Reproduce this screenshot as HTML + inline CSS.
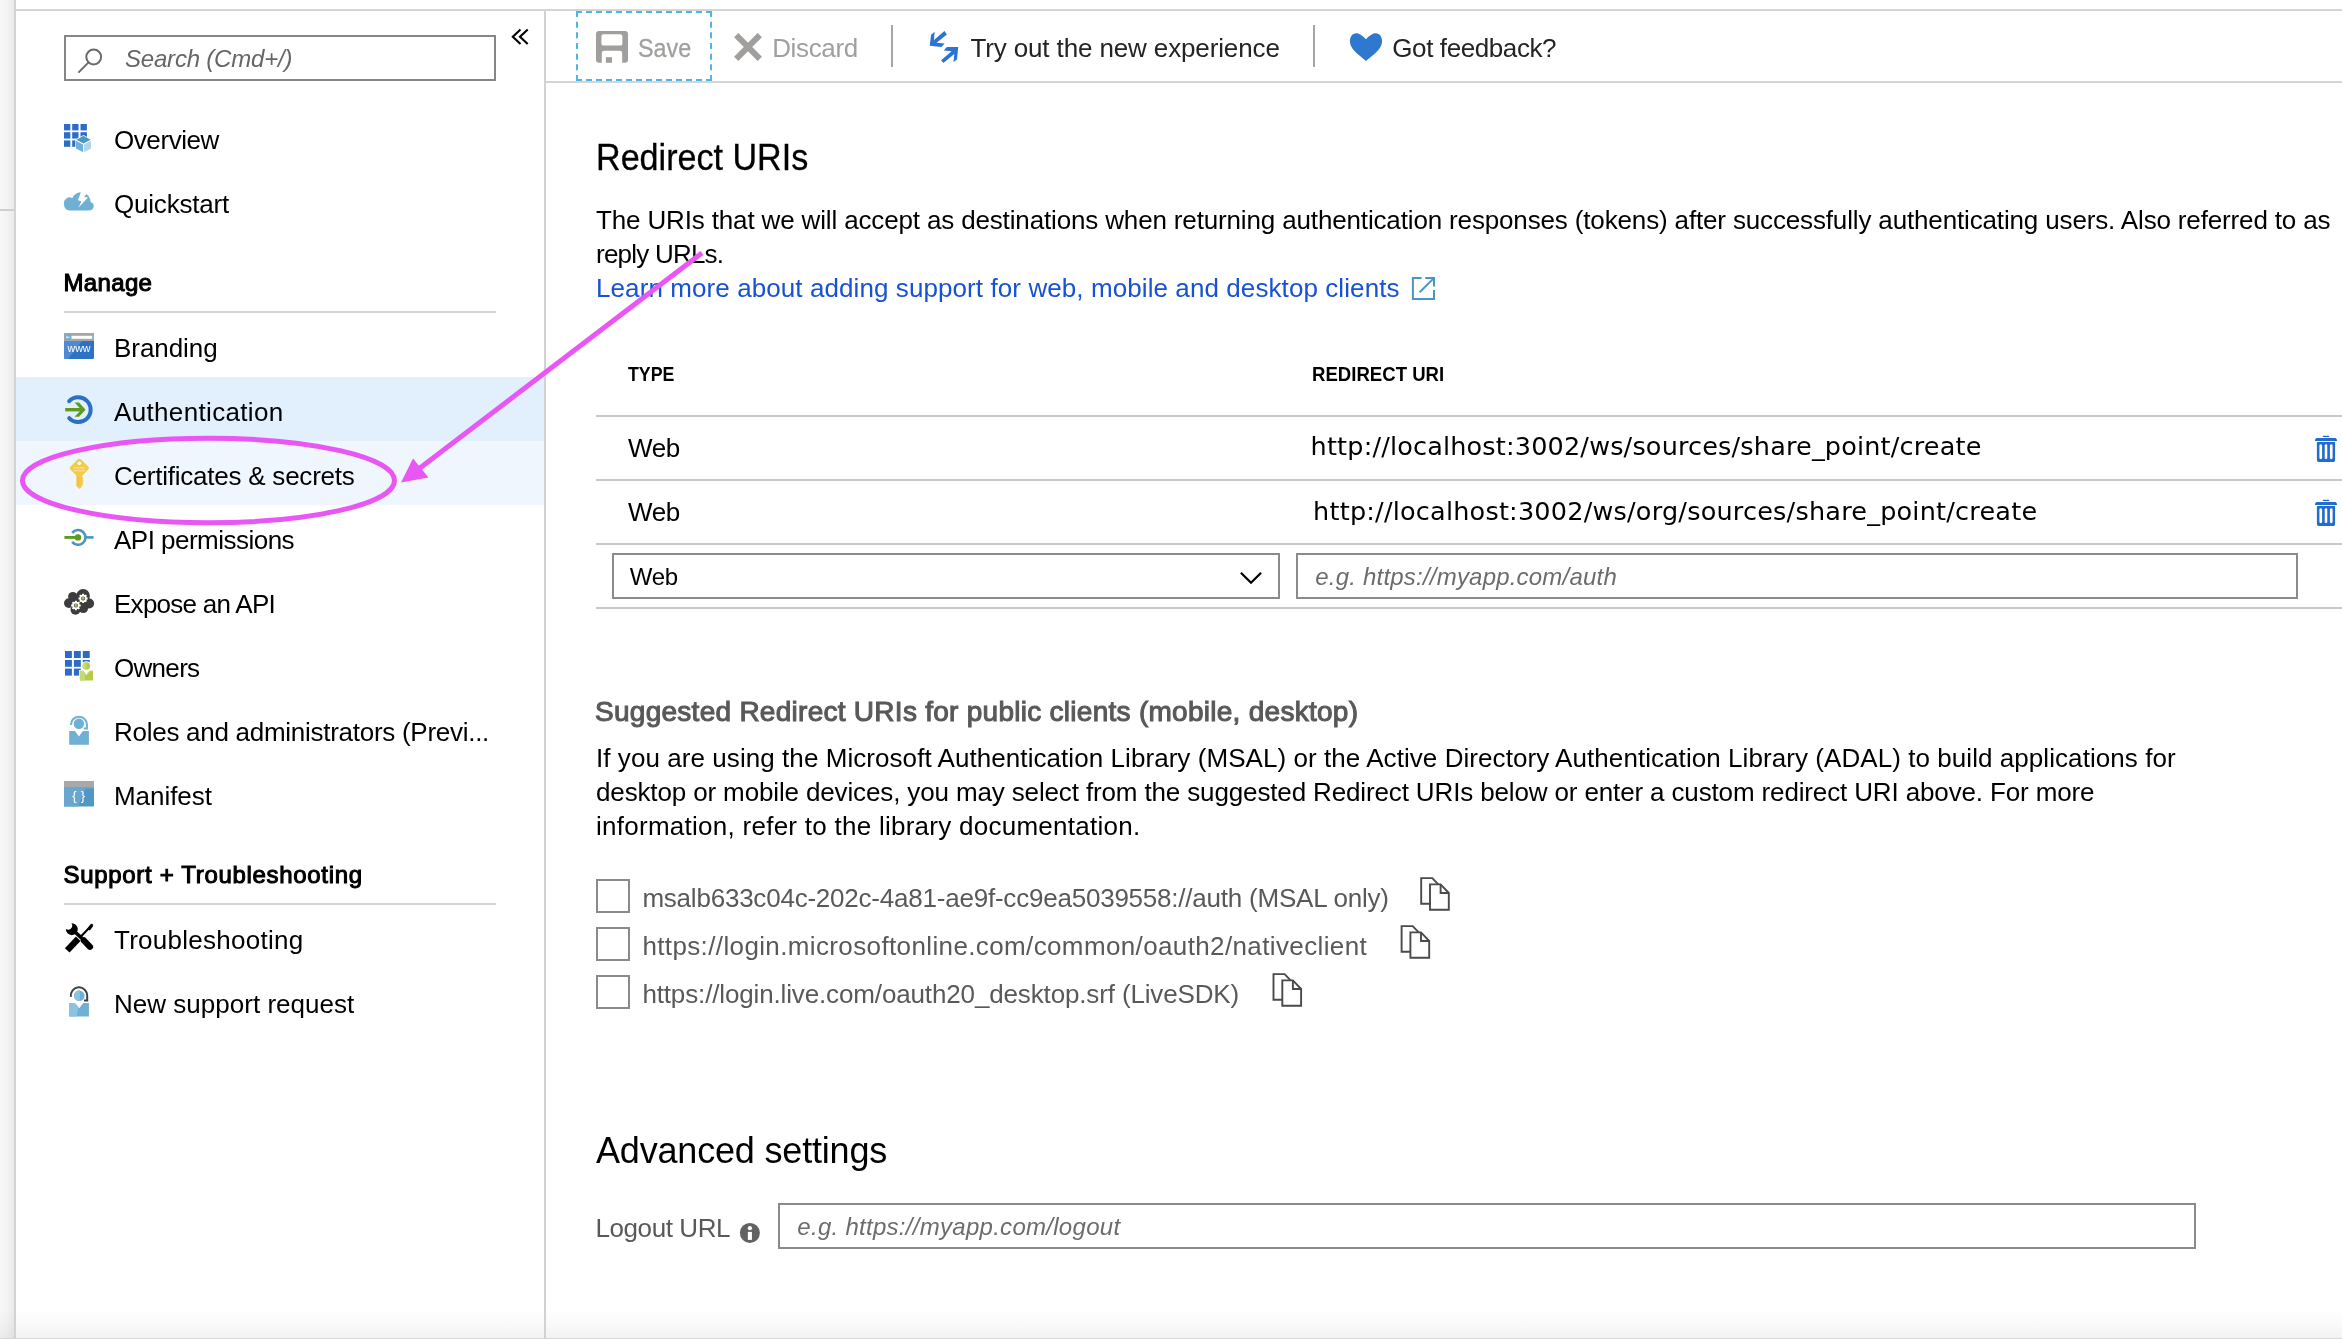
<!DOCTYPE html>
<html lang="en">
<head>
<meta charset="utf-8">
<title>Authentication - App registration</title>
<style>
html,body{margin:0;padding:0;}
body{width:2342px;height:1339px;overflow:hidden;background:#fff;position:relative;font-family:"Liberation Sans",sans-serif;}
#page{position:absolute;left:0;top:0;width:2342px;height:1339px;overflow:hidden;will-change:transform;background:#fff;}
.abs{position:absolute;}
.t{position:absolute;white-space:pre;display:block;}
svg{position:absolute;overflow:visible;}
/* chrome */
#strip{left:0;top:0;width:14px;height:1339px;background:linear-gradient(90deg,#f8f8f8 0%,#f4f4f4 45%,#ebebeb 100%);}
#stripline{left:14px;top:0;width:2px;height:1339px;background:#d3d3d3;}
#stripmark{left:0;top:209px;width:14px;height:2px;background:#cfcfcf;}
#topline{left:16px;top:9px;width:2326px;height:2px;background:#d5d5d5;}
#sidediv{left:544px;top:11px;width:2px;height:1328px;background:#d2d2d2;z-index:3;}
#stripline{z-index:3;}
#toolline{left:546px;top:81px;width:1796px;height:2px;background:#d5d5d5;}
#botshade{left:0;top:1309px;width:2342px;height:30px;background:linear-gradient(180deg,rgba(0,0,0,0) 0%,rgba(0,0,0,0.02) 45%,rgba(0,0,0,0.05) 100%);}
#botline{left:0;top:1338px;width:2342px;height:1px;background:#d6d6d6;}
/* sidebar */
#search{left:64px;top:35px;width:428px;height:42px;border:2px solid #868686;background:#fff;}
.hl1{left:16px;top:377px;width:528px;height:64px;background:#e2effc;}
.hl2{left:16px;top:441px;width:528px;height:64px;background:#eff6fd;}
.hr{height:2px;background:#c8c8c8;}
#sidebar .hr{background:#d4d4d4;}
/* main */
.box{border:2px solid #8a8a8a;background:#fff;box-sizing:border-box;}
.cbx{width:34px;height:34px;border:2px solid #8a8a8a;background:#fff;box-sizing:border-box;}
#savefocus{left:576px;top:11px;width:132px;height:66px;border:2px dashed #4fb4e6;}
.sep{width:2px;height:42px;top:25px;background:#a6a6a6;}
</style>
</head>
<body>
<div id="page">
<!-- page chrome -->
<div class="abs" id="strip"></div>
<div class="abs" id="stripline"></div>
<div class="abs" id="stripmark"></div>
<div class="abs" id="topline"></div>
<div class="abs" id="sidediv"></div>
<div class="abs" id="toolline"></div>

<!-- sidebar -->
<nav id="sidebar">
  <div class="abs hl1"></div>
  <div class="abs hl2"></div>
  <div class="abs" id="search"></div>
  <span class="t ph" style="left:125.0px;top:43.18px;font-size:24px;line-height:31px;letter-spacing:-0.198px;color:#666666;font-style:italic;">Search (Cmd+/)</span>
  <span class="t mi" style="left:114.0px;top:122.99px;font-size:26px;line-height:34px;letter-spacing:-0.426px;color:#000;">Overview</span>
  <span class="t mi" style="left:114.0px;top:186.99px;font-size:26px;line-height:34px;letter-spacing:-0.201px;color:#000;">Quickstart</span>
  <span class="t hd" style="left:63.5px;top:267.18px;font-size:24px;line-height:31px;letter-spacing:0.343px;color:#000;-webkit-text-stroke:1.05px #000;">Manage</span>
  <div class="abs hr" style="left:64px;top:311px;width:432px;"></div>
  <span class="t mi" style="left:114.0px;top:330.99px;font-size:26px;line-height:34px;letter-spacing:-0.060px;color:#000;">Branding</span>
  <span class="t mi" style="left:114.0px;top:394.99px;font-size:26px;line-height:34px;letter-spacing:0.343px;color:#000;">Authentication</span>
  <span class="t mi" style="left:114.0px;top:458.99px;font-size:26px;line-height:34px;letter-spacing:-0.231px;color:#000;">Certificates &amp; secrets</span>
  <span class="t mi" style="left:114.0px;top:522.99px;font-size:26px;line-height:34px;letter-spacing:-0.517px;color:#000;">API permissions</span>
  <span class="t mi" style="left:114.0px;top:586.99px;font-size:26px;line-height:34px;letter-spacing:-0.728px;color:#000;">Expose an API</span>
  <span class="t mi" style="left:114.0px;top:650.99px;font-size:26px;line-height:34px;letter-spacing:-0.696px;color:#000;">Owners</span>
  <span class="t mi" style="left:114.0px;top:714.99px;font-size:26px;line-height:34px;letter-spacing:-0.274px;color:#000;">Roles and administrators (Previ...</span>
  <span class="t mi" style="left:114.0px;top:778.99px;font-size:26px;line-height:34px;letter-spacing:-0.049px;color:#000;">Manifest</span>
  <span class="t hd" style="left:63.5px;top:859.18px;font-size:24px;line-height:31px;letter-spacing:0.681px;color:#000;-webkit-text-stroke:1.05px #000;">Support + Troubleshooting</span>
  <div class="abs hr" style="left:64px;top:903px;width:432px;"></div>
  <span class="t mi" style="left:114.0px;top:922.99px;font-size:26px;line-height:34px;letter-spacing:0.261px;color:#000;">Troubleshooting</span>
  <span class="t mi" style="left:114.0px;top:986.99px;font-size:26px;line-height:34px;letter-spacing:0.018px;color:#000;">New support request</span>
  <svg id="icons-side" width="2342" height="1339" viewBox="0 0 2342 1339" style="left:0;top:0;">
    <!-- search magnifier -->
    <g fill="none" stroke="#6a6a6a" stroke-width="2"><circle cx="93.7" cy="57" r="7.4"/><path d="M88.3 62.6 L78.4 72.6"/></g>
    <!-- collapse chevrons -->
    <path d="M520.5 29.6 L512.8 36.8 L520.5 44 M527.7 29.6 L520 36.8 L527.7 44" fill="none" stroke="#000" stroke-width="2.1"/>
    <!-- overview -->
    <g id="ic-overview">
      <g fill="#2c6cc4">
        <rect x="64" y="124" width="6.3" height="6.4"/><rect x="72.2" y="124" width="6.3" height="6.4"/><rect x="80.5" y="124" width="6.4" height="6.4"/>
        <rect x="64" y="132.2" width="6.3" height="6.4"/><rect x="72.2" y="132.2" width="6.3" height="6.4"/><rect x="80.5" y="132.2" width="6.4" height="6.4"/>
        <rect x="64" y="140.4" width="6.3" height="6.4"/><rect x="72.2" y="140.4" width="6.3" height="6.4"/>
      </g>
      <path d="M83.5 134.9 L91.8 139.5 V148.7 L83.5 153.1 L75.3 148.7 V139.5 Z" fill="#fff"/>
      <path d="M83.5 135.8 L90.6 139.7 L83.5 143.4 L76.4 139.7 Z" fill="#4f96c4"/>
      <path d="M76 140.8 L83 144.5 V152.2 L76 148.4 Z" fill="#72b1d6"/>
      <path d="M84 144.5 L91 140.8 V148.4 L84 152.2 Z" fill="#b0d4ea"/>
    </g>
    <!-- quickstart -->
    <g id="ic-quick">
      <path d="M69.6 210.5 H89.6 A4.4 4.4 0 0 0 90.6 201.9 A9.6 9.6 0 0 0 72.3 197.9 A6 6 0 0 0 64 204.6 A5.8 5.8 0 0 0 69.6 210.5 Z" fill="#6fb0d4"/>
      <path d="M81.4 190.6 L78 200.3 L81.4 201.3 L78.6 207.4 L88 197.6 L84.2 197 L87.3 192.4 Z" fill="#fff"/>
    </g>
    <!-- branding -->
    <g id="ic-brand">
      <rect x="64" y="333" width="30" height="26" rx="1.2" fill="#2d72c4"/>
      <path d="M64 359 V341 H82 L68 359 Z" fill="#5b93d4" opacity="0.75"/>
      <path d="M65.2 333 H92.8 A1.2 1.2 0 0 1 94 334.2 V341 H64 V334.2 A1.2 1.2 0 0 1 65.2 333 Z" fill="#a6a6a6"/>
      <rect x="71.5" y="335.8" width="20.6" height="3" fill="#fff"/>
      <circle cx="68" cy="337.2" r="2.9" fill="#5bb0de"/>
      <path d="M66.3 337.2 H69.8 M67.6 336 L66.3 337.2 L67.6 338.4" stroke="#fff" stroke-width="0.8" fill="none"/>
      <text x="79" y="352.3" font-family="Liberation Sans, sans-serif" font-size="11" fill="#fff" text-anchor="middle" textLength="23" lengthAdjust="spacingAndGlyphs">www</text>
    </g>
    <!-- authentication -->
    <g id="ic-auth" fill="none">
      <path d="M69.2 401.2 A12.4 12.4 0 1 1 69.2 418.2" stroke="#2b6fc6" stroke-width="4" stroke-linecap="round"/>
      <path d="M65.2 409.7 H82" stroke="#5e9a1f" stroke-width="3.4"/>
      <path d="M74.6 402.6 H79 L85.6 409.7 L79 416.8 H74.6 L81.2 409.7 Z" fill="#5e9a1f"/>
    </g>
    <!-- key -->
    <g id="ic-key">
      <path d="M79.4 458.7 Q80.4 458.7 81.2 459.6 L88.4 466.8 Q89.8 468.2 88.4 469.6 L82.4 475.6 V477.6 L83.6 478.6 L82.4 479.8 L83.8 481 L82.4 482.2 L83.6 483.4 L82.4 484.6 V486 L79.5 489 L76.3 486 V475.6 L70.4 469.6 Q69 468.2 70.4 466.8 L77.6 459.6 Q78.4 458.7 79.4 458.7 Z" fill="#f4cb45"/>
      <circle cx="79.3" cy="463.3" r="1.8" fill="#fff"/>
      <path d="M73.6 467.9 H85.2 M73.6 470.6 H85.2" stroke="#f9de8e" stroke-width="1.3"/>
      <path d="M78.2 477 V486" stroke="#f1b244" stroke-width="0.9"/>
    </g>
    <!-- api permissions -->
    <g id="ic-api" fill="none">
      <path d="M72.2 532.9 A7.4 7.4 0 1 1 72.2 541.9" stroke="#4a94c0" stroke-width="2.6"/>
      <path d="M85.6 537.4 H93.6" stroke="#4a94c0" stroke-width="2.6"/>
      <path d="M64.4 537.4 H78" stroke="#5e9a1f" stroke-width="2.9"/>
      <circle cx="78" cy="537.4" r="3.2" fill="#5e9a1f"/>
    </g>
    <!-- expose an api -->
    <g id="ic-expose">
      <g fill="#3c3c3c">
        <circle cx="83.1" cy="595.9" r="6.8"/><circle cx="72.8" cy="596.6" r="4.7"/><circle cx="68.9" cy="603.1" r="4.9"/>
        <circle cx="89.2" cy="603.5" r="4.9"/><circle cx="75.5" cy="609.8" r="5"/><circle cx="83.3" cy="608.3" r="4.8"/>
        <circle cx="78.5" cy="602.5" r="7"/>
      </g>
      <g fill="#fff">
        <circle cx="83.1" cy="598.4" r="3.6"/>
        <g stroke="#fff" stroke-width="2"><path d="M83.1 593.8 V603 M78.5 598.4 H87.7 M79.85 595.15 L86.35 601.65 M86.35 595.15 L79.85 601.65"/></g>
        <circle cx="75.9" cy="605.5" r="3.7"/>
        <g stroke="#fff" stroke-width="2"><path d="M75.9 600.7 V610.3 M71.1 605.5 H80.7 M72.5 602.1 L79.3 608.9 M79.3 602.1 L72.5 608.9"/></g>
      </g>
      <circle cx="83.1" cy="598.4" r="2" fill="#3c3c3c"/><circle cx="83.1" cy="598.4" r="1.4" fill="#a8cc3a"/>
      <circle cx="75.9" cy="605.5" r="2" fill="#3c3c3c"/><circle cx="75.9" cy="605.5" r="1.4" fill="#a8cc3a"/>
    </g>
    <!-- owners -->
    <g id="ic-owners">
      <g fill="#2c6cc4">
        <rect x="65" y="651" width="6.9" height="7"/><rect x="73.9" y="651" width="6.9" height="7"/><rect x="82.8" y="651" width="6.9" height="7"/>
        <rect x="65" y="660" width="6.9" height="6.8"/><rect x="73.9" y="660" width="6.9" height="6.8"/><rect x="82.8" y="660" width="6.9" height="3"/>
        <rect x="65" y="668.6" width="6.9" height="7"/><rect x="73.9" y="668.6" width="6.9" height="7"/>
      </g>
      <circle cx="86.4" cy="666" r="4.8" fill="#fff"/>
      <circle cx="86.4" cy="666" r="3.8" fill="#b6cd4b"/>
      <path d="M82.6 666 A3.8 3.8 0 0 1 86.4 662.2 V669.8 A3.8 3.8 0 0 1 82.6 666 Z" fill="#c6d973"/>
      <path d="M79.9 670.8 H83 L86.4 675 L89.8 670.8 H93 V680.6 H79.9 Z" fill="#b6cd4b" stroke="#fff" stroke-width="1.6" paint-order="stroke"/>
      <path d="M79.9 670.8 H83 L85 673.3 V680.6 H79.9 Z" fill="#c6d973"/>
    </g>
    <!-- roles -->
    <g id="ic-roles">
      <circle cx="78.9" cy="723.7" r="5.2" fill="#6fb0d4"/>
      <path d="M71 725 A7.9 7.9 0 1 1 86.9 724.2 V728.6 H83.8" fill="none" stroke="#6fb0d4" stroke-width="2"/>
      <path d="M69.2 731 H74.9 L78.9 736.4 L82.8 731 H88.9 V744.8 H69.2 Z" fill="#6fb0d4"/>
    </g>
    <!-- manifest -->
    <g id="ic-manifest">
      <rect x="64" y="781" width="30" height="25.6" rx="0.8" fill="#5197c5"/>
      <path d="M64 806.6 V787 H86 L78 806.6 Z" fill="#6aa7cf"/>
      <rect x="64" y="781" width="30" height="6" fill="#a9a9a9"/>
      <rect x="64" y="787" width="30" height="1.6" fill="#6aa7cf"/>
      <text x="78.7" y="799.8" font-family="Liberation Sans, sans-serif" font-size="13" fill="#fff" text-anchor="middle" textLength="13" lengthAdjust="spacing">{ }</text>
    </g>
    <!-- troubleshooting -->
    <g id="ic-trouble" fill="none" stroke="#000">
      <path d="M92.6 924.3 L79.5 938" stroke-width="2"/>
      <path d="M91.8 925.2 L88.6 929.6" stroke-width="3.2"/>
      <path d="M78.2 938.8 L67.2 950.4" stroke-width="6.4"/>
      <path d="M75 932 L82 938.4" stroke-width="3.6"/>
      <path d="M83.8 940.4 L90 946.8" stroke-width="6.2" stroke-linecap="round"/>
      <path d="M71.4 923.2 A6 6 0 1 1 65.8 929 A4.1 4.1 0 0 0 71.4 923.2 Z" fill="#000" stroke="none"/>
    </g>
    <!-- new support request -->
    <g id="ic-support">
      <circle cx="79.3" cy="995.7" r="5.3" fill="#6fb0d4"/>
      <path d="M74 995.7 A5.3 5.3 0 0 1 79.9 990.4 V1001 A5.3 5.3 0 0 1 74 995.7 Z" fill="#8cc3e0"/>
      <path d="M70.9 996.8 A8.2 8.2 0 1 1 87.2 995.8 V1000.4 H84" fill="none" stroke="#414141" stroke-width="2"/>
      <path d="M69.2 1003.1 H74.9 L79.3 1008.2 L83.2 1003.1 H88.9 V1016.6 H69.2 Z" fill="#6fb0d4"/>
      <path d="M69.2 1003.1 H74.9 L78.2 1007 L76.8 1016.6 H69.2 Z" fill="#8cc3e0"/>
    </g>
  </svg>
</nav>

<!-- toolbar -->
<div id="toolbar">
  <div class="abs" id="savefocus"></div>
  <span class="t tb" style="left:637.8px;top:30.99px;font-size:26px;line-height:34px;letter-spacing:0.000px;color:#a19f9d;transform:scaleX(0.8961);transform-origin:0 0;-webkit-text-stroke:0.3px #a19f9d;">Save</span>
  <span class="t tb" style="left:772.2px;top:30.99px;font-size:26px;line-height:34px;letter-spacing:-0.363px;color:#a19f9d;">Discard</span>
  <div class="abs sep" style="left:891px;"></div>
  <span class="t tb" style="left:970.4px;top:30.99px;font-size:26px;line-height:34px;letter-spacing:-0.128px;color:#252423;">Try out the new experience</span>
  <div class="abs sep" style="left:1313px;"></div>
  <span class="t tb" style="left:1392.3px;top:30.99px;font-size:26px;line-height:34px;letter-spacing:-0.405px;color:#252423;">Got feedback?</span>
  <svg id="icons-tool" width="2342" height="1339" viewBox="0 0 2342 1339" style="left:0;top:0;">
    <!-- save -->
    <path fill-rule="evenodd" fill="#a19f9d" d="M599 31 H625 A3 3 0 0 1 628 34 V59.8 A3 3 0 0 1 625 62.8 H622.2 V53 A2.2 2.2 0 0 0 620 50.8 H604 A2.2 2.2 0 0 0 601.8 53 V62.8 H599 A3 3 0 0 1 596 59.8 V34 A3 3 0 0 1 599 31 Z M603.6 34.2 A2.2 2.2 0 0 0 601.4 36.4 V43.4 A2.2 2.2 0 0 0 603.6 45.6 H620.2 A2.2 2.2 0 0 0 622.4 43.4 V36.4 A2.2 2.2 0 0 0 620.2 34.2 Z"/>
    <rect x="605.9" y="57.2" width="6.1" height="5.6" fill="#a19f9d"/>
    <!-- discard X -->
    <path d="M736.2 35.2 L759.8 58.8 M759.8 35.2 L736.2 58.8" stroke="#a19f9d" stroke-width="6" fill="none"/>
    <!-- try out arrows -->
    <g fill="#2b74d0">
      <path d="M944.4 31.1 L946.9 34.4 L936.6 42.8 L944.6 43.6 L941.4 46.9 L929.7 45.7 L931.1 34.8 L934.6 31.7 L934 40.1 Z"/>
      <path d="M958.2 47.1 H946.9 L943.8 50.6 L951.6 51.2 L941.1 60.2 L943.4 62.9 L954.3 54.1 L953.5 61.9 L957 59.4 Z"/>
    </g>
    <!-- heart -->
    <path d="M1366 39.3 C1362 35 1358.8 33.2 1356.3 33.2 C1352.4 33.2 1349.9 36.8 1349.9 41.2 C1349.9 48.2 1357 53.6 1366 61 C1375 53.6 1382.1 48.2 1382.1 41.2 C1382.1 36.8 1379.6 33.2 1375.7 33.2 C1373.2 33.2 1370 35 1366 39.3 Z" fill="#2f78d0"/>
  </svg>
</div>

<!-- main content -->
<main id="main">
  <span class="t h2" style="left:595.5px;top:134.03px;font-size:36px;line-height:47px;letter-spacing:0.000px;color:#000;transform:scaleX(0.9473);transform-origin:0 0;-webkit-text-stroke:0.3px #000;">Redirect URIs</span>
  <span class="t p" style="left:596.0px;top:202.99px;font-size:26px;line-height:34px;letter-spacing:-0.149px;color:#000;">The URIs that we will accept as destinations when returning authentication responses (tokens) after successfully authenticating users. Also referred to as</span>
  <span class="t p" style="left:596.0px;top:236.99px;font-size:26px;line-height:34px;letter-spacing:-0.780px;color:#000;">reply URLs.</span>
  <span class="t lnk" style="left:596.0px;top:270.99px;font-size:26px;line-height:34px;letter-spacing:0.086px;color:#1753d1;">Learn more about adding support for web, mobile and desktop clients</span>
  <span class="t th" style="left:628.4px;top:361.07px;font-size:20px;line-height:26px;letter-spacing:0.000px;color:#000;font-weight:700;transform:scaleX(0.8881);transform-origin:0 0;">TYPE</span>
  <span class="t th" style="left:1311.5px;top:361.07px;font-size:20px;line-height:26px;letter-spacing:0.000px;color:#000;font-weight:700;transform:scaleX(0.9291);transform-origin:0 0;">REDIRECT URI</span>
  <div class="abs hr" style="left:596px;top:415px;width:1746px;"></div>
  <span class="t td" style="left:628.1px;top:430.99px;font-size:26px;line-height:34px;letter-spacing:-0.420px;color:#000;">Web</span>
  <span class="t td" style="left:1310.6px;top:429.68px;font-size:25.5px;line-height:33px;letter-spacing:0.176px;color:#000;font-family:'DejaVu Sans',sans-serif;">http://localhost:3002/ws/sources/share_point/create</span>
  <div class="abs hr" style="left:596px;top:479px;width:1746px;"></div>
  <span class="t td" style="left:628.1px;top:494.99px;font-size:26px;line-height:34px;letter-spacing:-0.420px;color:#000;">Web</span>
  <span class="t td" style="left:1313.1px;top:494.68px;font-size:25.5px;line-height:33px;letter-spacing:0.215px;color:#000;font-family:'DejaVu Sans',sans-serif;">http://localhost:3002/ws/org/sources/share_point/create</span>
  <div class="abs hr" style="left:596px;top:543px;width:1746px;"></div>
  <div class="abs box" style="left:612px;top:553px;width:668px;height:46px;"></div>
  <span class="t sel" style="left:629.7px;top:561.18px;font-size:24px;line-height:31px;letter-spacing:-0.237px;color:#000;">Web</span>
  <div class="abs box" style="left:1296px;top:553px;width:1002px;height:46px;"></div>
  <span class="t ph" style="left:1315.3px;top:561.18px;font-size:24px;line-height:31px;letter-spacing:0.204px;color:#6c6c6c;font-style:italic;">e.g. https://myapp.com/auth</span>
  <div class="abs hr" style="left:596px;top:607px;width:1746px;"></div>

  <span class="t h3" style="left:595.0px;top:694.30px;font-size:28px;line-height:36px;letter-spacing:0.271px;color:#595959;-webkit-text-stroke:1.05px #595959;">Suggested Redirect URIs for public clients (mobile, desktop)</span>
  <span class="t p" style="left:596.0px;top:740.99px;font-size:26px;line-height:34px;letter-spacing:0.063px;color:#000;">If you are using the Microsoft Authentication Library (MSAL) or the Active Directory Authentication Library (ADAL) to build applications for</span>
  <span class="t p" style="left:596.0px;top:774.99px;font-size:26px;line-height:34px;letter-spacing:-0.138px;color:#000;">desktop or mobile devices, you may select from the suggested Redirect URIs below or enter a custom redirect URI above. For more</span>
  <span class="t p" style="left:596.0px;top:808.99px;font-size:26px;line-height:34px;letter-spacing:0.264px;color:#000;">information, refer to the library documentation.</span>
  <div class="abs cbx" style="left:596px;top:879px;"></div>
  <span class="t cb" style="left:642.4px;top:880.99px;font-size:26px;line-height:34px;letter-spacing:-0.219px;color:#595959;">msalb633c04c-202c-4a81-ae9f-cc9ea5039558://auth (MSAL only)</span>
  <div class="abs cbx" style="left:596px;top:927px;"></div>
  <span class="t cb" style="left:642.4px;top:928.99px;font-size:26px;line-height:34px;letter-spacing:0.372px;color:#595959;">https://login.microsoftonline.com/common/oauth2/nativeclient</span>
  <div class="abs cbx" style="left:596px;top:975px;"></div>
  <span class="t cb" style="left:642.4px;top:976.99px;font-size:26px;line-height:34px;letter-spacing:-0.142px;color:#595959;">https://login.live.com/oauth20_desktop.srf (LiveSDK)</span>

  <span class="t h2" style="left:596.0px;top:1127.03px;font-size:36px;line-height:47px;letter-spacing:-0.180px;color:#000;">Advanced settings</span>
  <span class="t lbl" style="left:595.5px;top:1210.99px;font-size:26px;line-height:34px;letter-spacing:-0.423px;color:#595959;">Logout URL</span>
  <div class="abs box" style="left:778px;top:1203px;width:1418px;height:46px;"></div>
  <span class="t ph" style="left:797.3px;top:1211.18px;font-size:24px;line-height:31px;letter-spacing:0.283px;color:#6c6c6c;font-style:italic;">e.g. https://myapp.com/logout</span>
  <svg id="icons-main" width="2342" height="1339" viewBox="0 0 2342 1339" style="left:0;top:0;">
    <!-- external link -->
    <g fill="none" stroke="#4d95c1" stroke-width="2">
      <path d="M1421.6 277.9 H1412.9 V299 H1434 V290"/>
      <path d="M1425.2 277.9 H1434 V286.6"/>
      <path d="M1419.6 292.2 L1433.6 278.4"/>
    </g>
    <!-- select chevron -->
    <path d="M1240.9 572.7 L1251 582.8 L1261.1 572.7" fill="none" stroke="#000" stroke-width="2.2"/>
    <!-- delete -->
    <g fill="#226ccc">
      <rect x="2322.8" y="435.7" width="6.4" height="1.3" rx="0.6"/>
      <path d="M2316.4 438.1 H2335.6 L2337 439.6 V440.9 H2315 V439.6 Z"/>
      <path fill-rule="evenodd" d="M2316.9 442.1 H2335.1 V460.2 A1.8 1.8 0 0 1 2333.3 462.0 H2318.7 A1.8 1.8 0 0 1 2316.9 460.2 Z M2319.4 445.6 V457.8 A1.35 1.35 0 0 0 2322.1 457.8 V445.6 A1.35 1.35 0 0 0 2319.4 445.6 Z M2324.7 445.6 V457.8 A1.3 1.3 0 0 0 2327.3 457.8 V445.6 A1.3 1.3 0 0 0 2324.7 445.6 Z M2329.9 445.6 V457.8 A1.35 1.35 0 0 0 2332.6 457.8 V445.6 A1.35 1.35 0 0 0 2329.9 445.6 Z"/>
    </g>
    <g fill="#226ccc">
      <rect x="2322.8" y="499.7" width="6.4" height="1.3" rx="0.6"/>
      <path d="M2316.4 502.1 H2335.6 L2337 503.6 V504.9 H2315 V503.6 Z"/>
      <path fill-rule="evenodd" d="M2316.9 506.1 H2335.1 V524.2 A1.8 1.8 0 0 1 2333.3 526.0 H2318.7 A1.8 1.8 0 0 1 2316.9 524.2 Z M2319.4 509.6 V521.8 A1.35 1.35 0 0 0 2322.1 521.8 V509.6 A1.35 1.35 0 0 0 2319.4 509.6 Z M2324.7 509.6 V521.8 A1.3 1.3 0 0 0 2327.3 521.8 V509.6 A1.3 1.3 0 0 0 2324.7 509.6 Z M2329.9 509.6 V521.8 A1.35 1.35 0 0 0 2332.6 521.8 V509.6 A1.35 1.35 0 0 0 2329.9 509.6 Z"/>
    </g>
    <!-- copy -->
    <g transform="translate(0 0)" fill="none" stroke="#4a4a4a" stroke-width="1.9" stroke-linejoin="miter">
      <path d="M1430 884.4 H1440.6 L1448.8 893 V909.8 H1430 Z"/>
      <path d="M1440.6 884.4 V893 H1448.8"/>
      <path d="M1430 903.7 H1421.2 V878.1 H1432.3 L1438.3 884.4"/>
    </g>
    <g transform="translate(-19.6 48)" fill="none" stroke="#4a4a4a" stroke-width="1.9" stroke-linejoin="miter">
      <path d="M1430 884.4 H1440.6 L1448.8 893 V909.8 H1430 Z"/>
      <path d="M1440.6 884.4 V893 H1448.8"/>
      <path d="M1430 903.7 H1421.2 V878.1 H1432.3 L1438.3 884.4"/>
    </g>
    <g transform="translate(-147.7 96)" fill="none" stroke="#4a4a4a" stroke-width="1.9" stroke-linejoin="miter">
      <path d="M1430 884.4 H1440.6 L1448.8 893 V909.8 H1430 Z"/>
      <path d="M1440.6 884.4 V893 H1448.8"/>
      <path d="M1430 903.7 H1421.2 V878.1 H1432.3 L1438.3 884.4"/>
    </g>
    <!-- info -->
    <circle cx="749.9" cy="1232.9" r="10" fill="#626262"/>
    <circle cx="749.9" cy="1228.2" r="2.1" fill="#fff"/>
    <rect x="747.85" y="1231.9" width="4.1" height="8" fill="#fff"/>
  </svg>
</main>

<div class="abs" id="botshade"></div>
<div class="abs" id="botline"></div>

<!-- annotation overlay -->
<svg id="anno" width="2342" height="1339" viewBox="0 0 2342 1339" style="left:0;top:0;pointer-events:none;z-index:5;">
  <ellipse cx="208.5" cy="480.5" rx="186" ry="42.3" fill="none" stroke="#e857f4" stroke-width="5"/>
  <line x1="702" y1="252.9" x2="418" y2="469.5" stroke="#e857f4" stroke-width="5" stroke-linecap="butt"/>
  <polygon points="401,482.5 413,458.5 428.5,477.5" fill="#e857f4"/>
</svg>
</div>
</body>
</html>
